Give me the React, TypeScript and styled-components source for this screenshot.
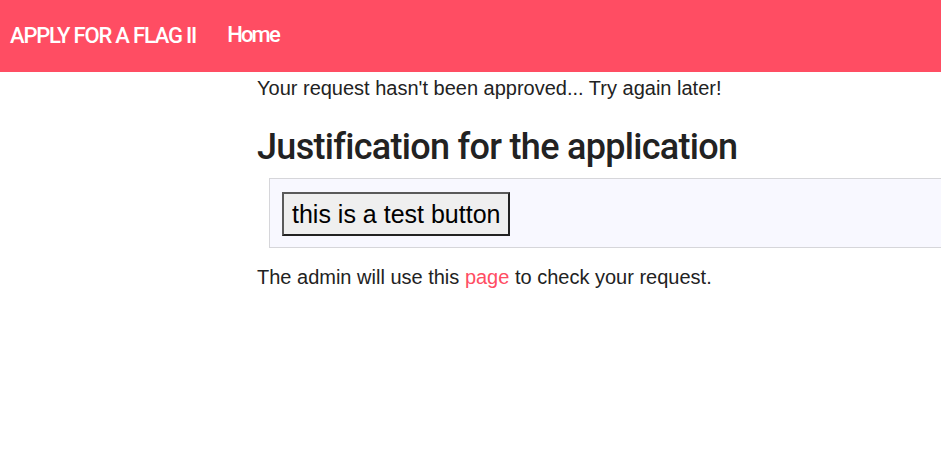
import React from "react";
import styled, { createGlobalStyle } from "styled-components";

const Global = createGlobalStyle`
  html, body { margin: 0; padding: 0; background: #fff; }
  body { font-family: "Liberation Sans", Arial, sans-serif; color: #222; overflow: hidden; }
`;

const Navbar = styled.nav`
  height: 72px;
  background: #ff4d63;
  display: flex;
  align-items: center;
  padding: 0 10px;
  gap: 31px;
  font-family: Roboto, sans-serif;
  color: #fff;
`;

const NavItem = styled.a<{ $lift?: number; $spacing: number }>`
  font-size: 22px;
  font-weight: 500;
  line-height: 26px;
  letter-spacing: ${(p) => p.$spacing}px;
  color: #fff;
  text-decoration: none;
  margin-top: ${(p) => -(p.$lift ?? 0) * 2}px;
`;

const Main = styled.main`
  margin-left: 257px;
  width: 720px;
`;

const Message = styled.p`
  margin: 5px 0 0;
  font-size: 20px;
  line-height: 22px;
`;

const Heading = styled.h1`
  font-family: Roboto, sans-serif;
  font-size: 36px;
  font-weight: 500;
  letter-spacing: -0.7px;
  margin: 24px 0 7px;
  line-height: 48px;
  color: #222;
`;

const Justification = styled.div`
  margin-left: 12px;
  background: #f8f8ff;
  border: 1px solid #d6d6da;
  padding: 13px 12px 11px;
  display: flex;
  align-items: flex-start;
`;

const TestButton = styled.button`
  font-family: "Liberation Sans", Arial, sans-serif;
  font-size: 25px;
  padding: 0 8px;
  background: #efefef;
  border: 2px solid #222;
  border-left-color: #5a5a5a;
  border-top-color: #5a5a5a;
  color: #000;
  height: 44px;
  white-space: nowrap;
`;

const Footer = styled.p`
  margin: 18px 0 0;
  font-size: 20px;
  line-height: 23px;
`;

const Link = styled.a`
  color: #ff4d63;
  text-decoration: none;
`;

export default function App() {
  return (
    <>
      <Global />
      <Navbar>
        <NavItem href="#" $spacing={-1.2}>APPLY FOR A FLAG II</NavItem>
        <NavItem href="#" $spacing={-1.8} $lift={1}>Home</NavItem>
      </Navbar>
      <Main>
        <Message>Your request hasn't been approved... Try again later!</Message>
        <Heading>Justification for the application</Heading>
        <Justification>
          <TestButton>this is a test button</TestButton>
        </Justification>
        <Footer>
          The admin will use this <Link href="#">page</Link> to check your request.
        </Footer>
      </Main>
    </>
  );
}
